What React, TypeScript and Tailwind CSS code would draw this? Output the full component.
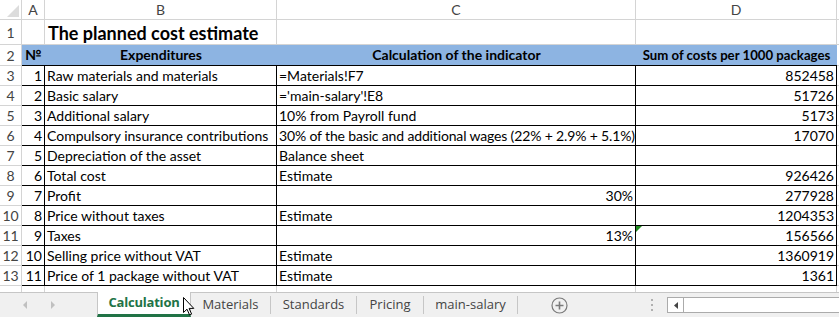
const rows = [
  { no: 1, name: "Raw materials and materials", calc: "=Materials!F7", sum: "852458" },
  { no: 2, name: "Basic salary", calc: "='main-salary'!E8", sum: "51726" },
  { no: 3, name: "Additional salary", calc: "10% from Payroll fund", sum: "5173" },
  { no: 4, name: "Compulsory insurance contributions", calc: "30% of the basic and additional wages (22% + 2.9% + 5.1%)", sum: "17070", tight: true },
  { no: 5, name: "Depreciation of the asset", calc: "Balance sheet", sum: "" },
  { no: 6, name: "Total cost", calc: "Estimate", sum: "926426" },
  { no: 7, name: "Profit", calc: "30%", right: true, sum: "277928" },
  { no: 8, name: "Price without taxes", calc: "Estimate", sum: "1204353" },
  { no: 9, name: "Taxes", calc: "13%", right: true, sum: "156566", flag: true },
  { no: 10, name: "Selling price without VAT", calc: "Estimate", sum: "1360919" },
  { no: 11, name: "Price of 1 package without VAT", calc: "Estimate", sum: "1361" },
];

const cell = "font-['Lato',sans-serif] text-[14px] leading-[19px] text-black whitespace-nowrap overflow-hidden";

function RowHead({ n, h }: { n?: number | string; h: string }) {
  return (
    <div className={`${h} w-[22px] shrink-0 border-r border-b border-[#d4d4d4] flex items-center justify-center font-['Lato',sans-serif] text-[14px] text-[#444]`}>
      {n}
    </div>
  );
}

export default function App() {
  return (
    <div className="w-[839px] h-[317px] bg-white overflow-hidden flex flex-col select-none">
      {/* column headings */}
      <div className="flex h-5 shrink-0">
        <div className="w-[22px] h-5 shrink-0 border-r border-b border-[#d4d4d4] flex items-end justify-end pr-[2px] pb-[2px]">
          <svg width="12" height="12" viewBox="0 0 12 12">
            <path d="M12 0 L12 12 L0 12 Z" fill="#dcdcdc" />
          </svg>
        </div>
        {[
          ["A", "w-[23px]"],
          ["B", "w-[232px]"],
          ["C", "w-[359px]"],
          ["D", "w-[201px]"],
        ].map(([l, w]) => (
          <div key={l} className={`${w} shrink-0 border-r border-b border-[#d4d4d4] flex items-center justify-center font-['Lato',sans-serif] text-[14px] text-[#444]`}>
            {l}
          </div>
        ))}
        <div className="flex-1 border-b border-[#d4d4d4]" />
      </div>

      {/* row 1 title */}
      <div className="flex h-[25px] shrink-0">
        <RowHead n={1} h="h-[25px]" />
        <div className="w-[23px] shrink-0 border-r border-b border-[#d4d4d4]" />
        <div className="w-[232px] shrink-0 border-r border-b border-[#d4d4d4] pl-[3px] pt-[2px] font-['Lato',sans-serif] font-bold text-[18px] leading-[22px] whitespace-nowrap">
          The planned cost estimate
        </div>
        <div className="w-[359px] shrink-0 border-r border-b border-[#d4d4d4]" />
        <div className="w-[201px] shrink-0 border-r border-b border-[#d4d4d4]" />
        <div className="flex-1 border-b border-[#d4d4d4]" />
      </div>

      {/* row 2 header */}
      <div className="flex h-[21px] shrink-0">
        <RowHead n={2} h="h-[21px]" />
        <div className="flex flex-1 bg-[#8db4e2] border-b border-black font-['Lato',sans-serif] font-bold text-[14px] leading-[20px] whitespace-nowrap">
          <div className="w-[23px] shrink-0 pl-[3px]">№</div>
          <div className="w-[232px] shrink-0 text-center">Expenditures</div>
          <div className="w-[359px] shrink-0 text-center">Calculation of the indicator</div>
          <div className="w-[201px] shrink-0 text-center text-[13.2px]">Sum of costs per 1000 packages</div>
        </div>
        <div className="w-[3px] shrink-0 border-b border-[#d4d4d4]" />
      </div>

      {rows.map((r, i) => (
        <div key={r.no} className="flex h-5 shrink-0">
          <RowHead n={i + 3} h="h-5" />
          <div className={`${cell} w-[23px] shrink-0 border-r border-b border-black text-right pr-[2px]`}>{r.no}</div>
          <div className={`${cell} w-[232px] shrink-0 border-r border-b border-black pl-[2px]`}>{r.name}</div>
          <div className={`${cell} w-[359px] shrink-0 border-r border-b border-black ${r.right ? "text-right pr-[2px]" : "pl-[2px]"} ${r.tight ? "tracking-[-0.15px]" : ""}`}>{r.calc}</div>
          <div className={`${cell} relative w-[201px] shrink-0 border-r border-b border-black text-right pr-[2px]`}>
            {r.flag && (
              <svg className="absolute left-0 top-0" width="6" height="6" viewBox="0 0 6 6">
                <path d="M0 0 L6 0 L0 6 Z" fill="#1e8c1e" />
              </svg>
            )}
            {r.sum}
          </div>
          <div className="flex-1 border-b border-[#d4d4d4]" />
        </div>
      ))}

      {/* row 14 partial */}
      <div className="flex h-[6px] shrink-0">
        <div className="w-[22px] shrink-0 border-r border-[#d4d4d4]" />
        <div className="w-[23px] shrink-0 border-r border-[#d4d4d4]" />
        <div className="w-[232px] shrink-0 border-r border-[#d4d4d4]" />
        <div className="w-[359px] shrink-0 border-r border-[#d4d4d4]" />
        <div className="w-[201px] shrink-0 border-r border-[#d4d4d4]" />
      </div>

      {/* sheet tabs */}
      <div className="relative flex h-[25px] shrink-0 bg-[#f0f0f0] border-t border-[#c6c6c6] font-['Open_Sans',sans-serif] text-[13px] text-[#444]">
        <div className="w-[97px] shrink-0 flex items-center">
          <svg className="ml-[23px]" width="5" height="8" viewBox="0 0 5 8">
            <path d="M4 0 L0 4 L4 8 Z" fill="#c0c0c0" />
          </svg>
          <svg className="ml-[23px]" width="5" height="8" viewBox="0 0 5 8">
            <path d="M0 0 L4 4 L0 8 Z" fill="#c0c0c0" />
          </svg>
        </div>
        <div className="w-[94px] shrink-0 -mt-px bg-white border-x border-[#c6c6c6] border-b-[3px] border-b-[#217346] flex items-center justify-center font-bold text-[#217346] tracking-[-0.2px]">
          Calculation
        </div>
        <div className="w-[80px] shrink-0 flex items-center">
          <span className="flex-1 text-center">Materials</span>
          <span className="w-px h-[18px] bg-[#c6c6c6]" />
        </div>
        <div className="w-[86px] shrink-0 flex items-center">
          <span className="flex-1 text-center">Standards</span>
          <span className="w-px h-[18px] bg-[#c6c6c6]" />
        </div>
        <div className="w-[67px] shrink-0 flex items-center">
          <span className="flex-1 text-center">Pricing</span>
          <span className="w-px h-[18px] bg-[#c6c6c6]" />
        </div>
        <div className="w-[94px] shrink-0 flex items-center">
          <span className="flex-1 text-center">main-salary</span>
          <span className="w-px h-[18px] bg-[#c6c6c6]" />
        </div>
        <div className="w-[149px] shrink-0 flex items-center">
          <svg className="ml-[33px]" width="17" height="17" viewBox="0 0 17 17">
            <circle cx="8.5" cy="8.5" r="7.5" fill="none" stroke="#7a7a7a" strokeWidth="1.2" />
            <path d="M8.5 4.5 V12.5 M4.5 8.5 H12.5" stroke="#7a7a7a" strokeWidth="1.6" />
          </svg>
          <svg className="ml-[83px]" width="2" height="12" viewBox="0 0 2 12">
            <rect x="0" y="0" width="2" height="2" fill="#b0b0b0" />
            <rect x="0" y="5" width="2" height="2" fill="#b0b0b0" />
            <rect x="0" y="10" width="2" height="2" fill="#b0b0b0" />
          </svg>
        </div>
        <div className="flex-1 flex items-center">
          <div className="h-[16px] flex-1 bg-white border border-r-0 border-[#ababab] flex">
            <div className="w-[16px] border-r border-[#ababab] flex items-center justify-center">
              <svg width="4" height="7" viewBox="0 0 4 7">
                <path d="M4 0 L0 3.5 L4 7 Z" fill="#444" />
              </svg>
            </div>
          </div>
        </div>
        <svg className="absolute left-[183px] top-[4px]" width="12" height="19" viewBox="0 0 12 19">
          <path d="M0.5 0.5 L0.5 15.5 L4 12.2 L6.6 18 L8.6 17.1 L6.1 11.4 L10.8 11.4 Z" fill="white" stroke="black" strokeWidth="1" strokeLinejoin="miter" />
        </svg>
      </div>
    </div>
  );
}
